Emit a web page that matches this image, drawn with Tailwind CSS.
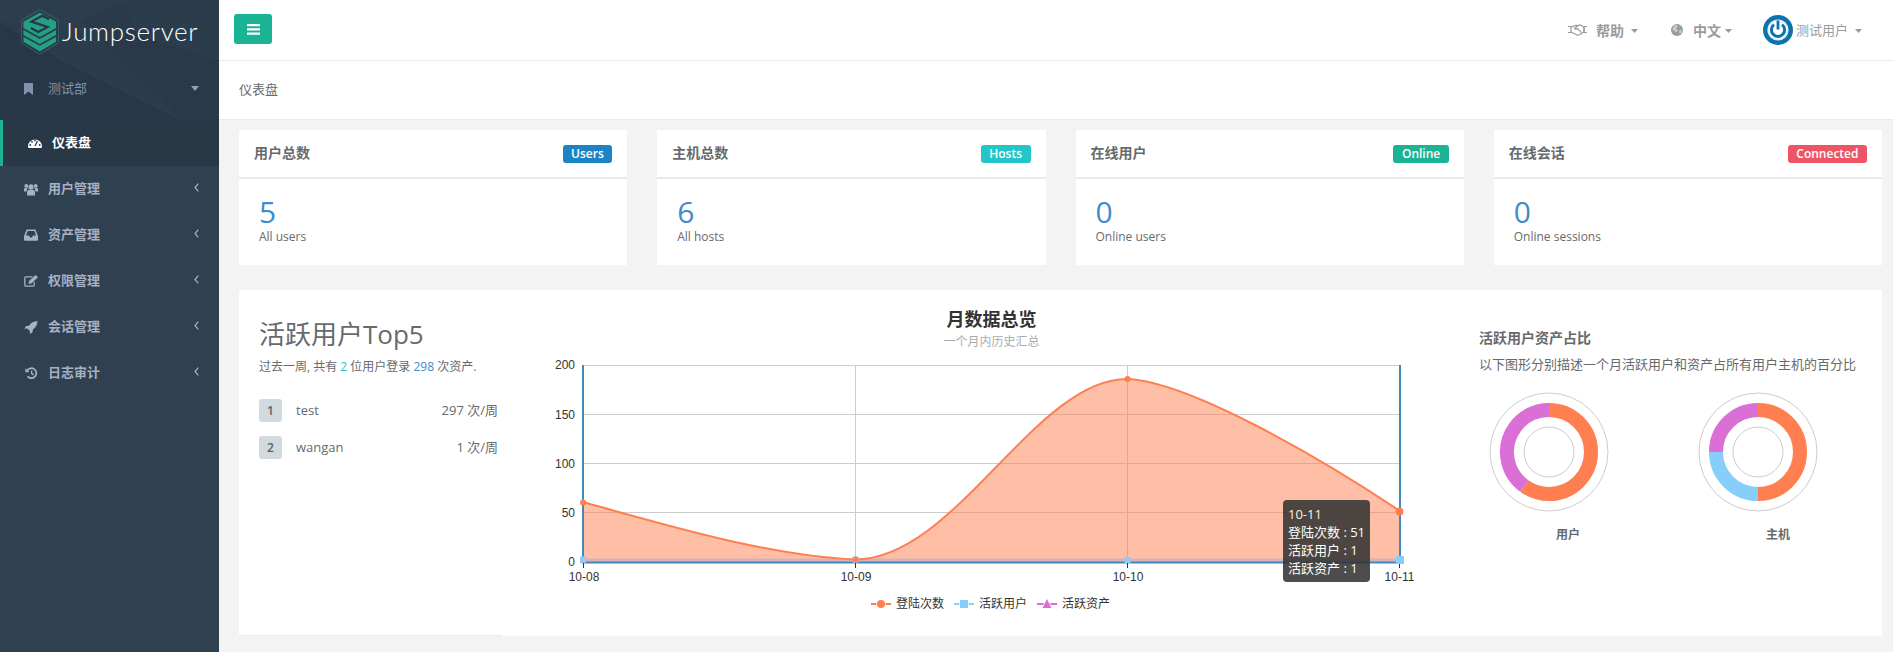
<!DOCTYPE html>
<html lang="zh-CN">
<head>
<meta charset="utf-8">
<title>仪表盘</title>
<script src="https://cdn.jsdelivr.net/npm/@tailwindcss/browser@4"></script>
</head>
<body>
<div class="flex h-[652px] w-[1893px] overflow-hidden bg-[#f3f3f4] text-[13px] text-[#676a6c] font-['Open_Sans','Noto_Sans_CJK_SC',sans-serif]">

  <aside class="w-[219px] shrink-0 bg-[#2f4050]">
    <div class="relative h-[120px] overflow-hidden bg-[#2b3c4c]">
      <svg class="absolute inset-0" width="219" height="120" viewBox="0 0 219 120">
        <polygon points="0,22 60,60 180,120 0,120" fill="#273747"/>
        <polygon points="60,0 120,0 180,120 110,50" fill="#2a3a4a"/>
        <polygon points="120,30 180,120 219,120 219,60" fill="#293949"/>
        <polygon points="0,0 130,0 60,30 0,22" fill="#2c3e4e"/>
      </svg>
      <div class="relative flex items-center pl-[21px] pt-[9px]">
        <svg width="38" height="46" viewBox="20.5 9 38.5 46" class="shrink-0">
          <polygon points="39.5,9.3 58.7,20 58.7,43 39.5,54.5 20.8,43 20.8,20" fill="none" stroke="#2c7f78" stroke-width="0.7"/>
          <polygon points="23,37 39.5,46 56,37 56,42 39.5,51.8 23,42" fill="#24a085"/>
          <polygon points="23,30 39.5,39 56,30 56,35 39.5,44.2 23,35" fill="#24a085"/>
          <polygon points="39.5,12.5 56,21.5 56,28 39.5,37 23,28 23,21.5" fill="#24a085"/>
          <polyline points="49,19 42,15.5 31,21.5 47.5,27 38,32 30.5,28" fill="none" stroke="#263747" stroke-width="2.2"/>
        </svg>
        <span class="mb-[3px] ml-[3px] font-['Lato',sans-serif] text-[26px] font-light leading-none tracking-[0.7px] text-white">Jumpserver</span>
      </div>
      <div class="absolute left-[24px] right-[20px] top-[79px] flex items-center text-[#7e92a9]">
        <svg width="9" height="12" viewBox="0 0 9 12" class="mr-[15px] shrink-0"><path d="M0 .6 Q0 0 .7 0 H8.3 Q9 0 9 .6 V11.6 Q9 12 8.6 11.8 L4.5 8.6 L.4 11.8 Q0 12 0 11.6Z" fill="#7e92a9"/></svg>
        <span>测试部</span>
        <svg width="8" height="5" viewBox="0 0 8 5" class="ml-auto"><path d="M0 0H8L4 5Z" fill="#8fa0b4"/></svg>
      </div>
    </div>
    <nav class="text-[13px] font-semibold text-[#a7b1c2]">
      <a class="flex h-[46px] items-center border-l-[3px] border-[#1ab394] bg-[#293846] pl-[25px] text-white">
        <svg width="14" height="10" viewBox="0 0 14 10" class="mr-[10px] shrink-0"><path d="M0 8.5 A7 7 0 0 1 14 8.5 Q14 10 13 10 H1 Q0 10 0 8.5Z" fill="#fff"/><path d="M7 8 L9.5 3" stroke="#293846" stroke-width="1.2"/><circle cx="2.3" cy="7" r=".9" fill="#293846"/><circle cx="4" cy="3.8" r=".9" fill="#293846"/><circle cx="7" cy="2.4" r=".9" fill="#293846"/><circle cx="11.7" cy="7" r=".9" fill="#293846"/></svg>
        <span>仪表盘</span>
      </a>
      <a class="flex h-[46px] items-center pl-[24px] pr-[20px]">
        <svg width="14" height="13" viewBox="0 0 14 12" class="mr-[10px] shrink-0" fill="#a7b1c2"><circle cx="7" cy="3.4" r="2.6"/><path d="M3 12 V8.8 Q3 6.2 5 6.2 H9 Q11 6.2 11 8.8 V12Z"/><circle cx="2.3" cy="2.4" r="1.9"/><circle cx="11.7" cy="2.4" r="1.9"/><path d="M0 8 V6 Q0 4.6 1.5 4.6 H3.5 Q3.3 6 2.4 8Z"/><path d="M14 8 V6 Q14 4.6 12.5 4.6 H10.5 Q10.7 6 11.6 8Z"/></svg>
        <span>用户管理</span>
        <svg width="5" height="9" viewBox="0 0 5 9" class="ml-auto mb-[4px]"><path d="M4.3 .7 L1 4.5 L4.3 8.3" fill="none" stroke="#a7b1c2" stroke-width="1.2"/></svg>
      </a>
      <a class="flex h-[46px] items-center pl-[24px] pr-[20px]">
        <svg width="14" height="12" viewBox="0 0 14 12" class="mr-[10px] shrink-0"><path fill-rule="evenodd" fill="#a7b1c2" d="M2.6 .5 H11.4 L14 7 V10.8 Q14 11.8 13 11.8 H1 Q0 11.8 0 10.8 V7Z M3.6 2 L2 6.5 H5 L6 8.5 H8 L9 6.5 H12 L10.4 2Z"/></svg>
        <span>资产管理</span>
        <svg width="5" height="9" viewBox="0 0 5 9" class="ml-auto mb-[4px]"><path d="M4.3 .7 L1 4.5 L4.3 8.3" fill="none" stroke="#a7b1c2" stroke-width="1.2"/></svg>
      </a>
      <a class="flex h-[46px] items-center pl-[24px] pr-[20px]">
        <svg width="14" height="12" viewBox="0 0 14 12" class="mr-[10px] shrink-0"><path d="M8.5 1.8 H2 Q.8 1.8 .8 3 V10 Q.8 11.2 2 11.2 H9 Q10.2 11.2 10.2 10 V7" fill="none" stroke="#a7b1c2" stroke-width="1.3"/><path d="M5 6 L11.5 0 L14 2.2 L7.4 8.4 L4.6 8.9Z" fill="#a7b1c2"/></svg>
        <span>权限管理</span>
        <svg width="5" height="9" viewBox="0 0 5 9" class="ml-auto mb-[4px]"><path d="M4.3 .7 L1 4.5 L4.3 8.3" fill="none" stroke="#a7b1c2" stroke-width="1.2"/></svg>
      </a>
      <a class="flex h-[46px] items-center pl-[24px] pr-[20px]">
        <svg width="14" height="13" viewBox="0 0 14 14" class="mr-[10px] shrink-0"><path d="M14 0 C9.8 .2 6.8 2 4.8 5 L1.6 5.4 L0 8.4 L3 8 L6 11 L5.6 14 L8.6 12.4 L9 9.2 C12 7.2 13.8 4.2 14 0Z" fill="#a7b1c2"/></svg>
        <span>会话管理</span>
        <svg width="5" height="9" viewBox="0 0 5 9" class="ml-auto mb-[4px]"><path d="M4.3 .7 L1 4.5 L4.3 8.3" fill="none" stroke="#a7b1c2" stroke-width="1.2"/></svg>
      </a>
      <a class="flex h-[46px] items-center pl-[24px] pr-[20px]">
        <svg width="14" height="12" viewBox="0 0 14 14" class="mr-[10px] shrink-0"><path d="M2.6 4 A5.8 5.8 0 1 1 3 11" fill="none" stroke="#a7b1c2" stroke-width="2"/><path d="M.4 1.4 L5.4 6 H.4Z" fill="#a7b1c2"/><path d="M7.8 4 V7.6 L10.2 9.2" fill="none" stroke="#a7b1c2" stroke-width="1.6"/></svg>
        <span>日志审计</span>
        <svg width="5" height="9" viewBox="0 0 5 9" class="ml-auto mb-[4px]"><path d="M4.3 .7 L1 4.5 L4.3 8.3" fill="none" stroke="#a7b1c2" stroke-width="1.2"/></svg>
      </a>
    </nav>
  </aside>

  <main class="flex min-w-0 flex-1 flex-col">
    <header class="flex h-[61px] items-center border-b border-[#e7eaec] bg-white pl-[15px] pr-[31px]">
      <button class="mb-[2px] flex h-[30px] w-[38px] items-center justify-center rounded-[3px] bg-[#1ab394]">
        <svg width="13" height="11" viewBox="0 0 13 11" fill="#fff"><rect width="13" height="2.2" rx=".5"/><rect y="4.3" width="13" height="2.2" rx=".5"/><rect y="8.6" width="13" height="2.2" rx=".5"/></svg>
      </button>
      <div class="ml-auto flex items-center text-[#999c9e]">
        <svg width="19" height="12" viewBox="0 0 19 12" class="shrink-0" fill="none" stroke="#999c9e" stroke-width="1.2"><path d="M0 2.5 H3 V8.5 H0"/><path d="M19 2.5 H16 V8.5 H19"/><path d="M3 3 L7 1.6 Q8.5 1 9.5 1.8 L12 1 L16 3 V8 L10.8 11 Q9.6 11.6 8.4 10.8 L3 8"/><path d="M9.5 1.8 L6.6 4.6 Q7.6 5.8 9.4 4.6 L13.6 8.6"/></svg>
        <span class="ml-[9px] mt-[1px] text-[14px] font-bold leading-none">帮助</span>
        <svg width="7" height="4" viewBox="0 0 7 4" class="ml-[7px] mt-[1px]"><path d="M0 0H7L3.5 4Z" fill="#999c9e"/></svg>
        <svg width="12" height="12" viewBox="0 0 12 12" class="ml-[33px]"><circle cx="6" cy="6" r="6" fill="#999c9e"/><path d="M3 1.5 L6 1 L6.6 3 L5 4.6 L6.6 6 L5.6 8.6 L3.6 7 L1.4 5.4 Z M8 6.5 L10.6 5.6 L10.4 8.6 L8.6 10Z" fill="#c9cbcc"/></svg>
        <span class="ml-[10px] mt-[1px] text-[14px] font-bold leading-none">中文</span>
        <svg width="7" height="4" viewBox="0 0 7 4" class="ml-[4px] mt-[1px]"><path d="M0 0H7L3.5 4Z" fill="#999c9e"/></svg>
        <svg width="30" height="30" viewBox="0 0 30 30" class="ml-[31px] mb-[1px]"><circle cx="15" cy="15" r="15" fill="#0b73ae"/><circle cx="15" cy="15" r="10.6" fill="#e6eef3"/><circle cx="15" cy="15" r="9" fill="#fff"/><path d="M11 9.6 A6.6 6.6 0 1 0 19 9.6" fill="none" stroke="#0b73ae" stroke-width="3"/><rect x="13.6" y="5.5" width="2.8" height="9" fill="#0b73ae"/></svg>
        <span class="ml-[3px] mt-[1px] leading-none">测试用户</span>
        <svg width="7" height="4" viewBox="0 0 7 4" class="ml-[7px] mt-[2px]"><path d="M0 0H7L3.5 4Z" fill="#999c9e"/></svg>
      </div>
    </header>

    <section class="flex h-[59px] items-center border-b border-[#e7eaec] bg-white px-[20px]">
      <span>仪表盘</span>
    </section>

    <div class="pl-[20px] pr-[11px] pt-[10px]">
      <div class="grid grid-cols-4 gap-[30px]">
        <div class="h-[135px] bg-white">
          <div class="flex h-[49px] items-center justify-between border-b-2 border-[#e7eaec] pl-[15px] pr-[15px]">
            <h5 class="mb-[2px] text-[14px] font-semibold">用户总数</h5>
            <span class="rounded-[3px] bg-[#1c84c6] px-[8.5px] text-[12px] font-semibold leading-[18px] text-white">Users</span>
          </div>
          <div class="pl-[20px] pt-[14px]">
            <div class="text-[30px] leading-[37px] text-[#428bca]">5</div>
            <div class="text-[12px] leading-[13px]">All users</div>
          </div>
        </div>
        <div class="h-[135px] bg-white">
          <div class="flex h-[49px] items-center justify-between border-b-2 border-[#e7eaec] pl-[15px] pr-[15px]">
            <h5 class="mb-[2px] text-[14px] font-semibold">主机总数</h5>
            <span class="rounded-[3px] bg-[#23c6c8] px-[8.5px] text-[12px] font-semibold leading-[18px] text-white">Hosts</span>
          </div>
          <div class="pl-[20px] pt-[14px]">
            <div class="text-[30px] leading-[37px] text-[#428bca]">6</div>
            <div class="text-[12px] leading-[13px]">All hosts</div>
          </div>
        </div>
        <div class="h-[135px] bg-white">
          <div class="flex h-[49px] items-center justify-between border-b-2 border-[#e7eaec] pl-[15px] pr-[15px]">
            <h5 class="mb-[2px] text-[14px] font-semibold">在线用户</h5>
            <span class="rounded-[3px] bg-[#1ab394] px-[8.5px] text-[12px] font-semibold leading-[18px] text-white">Online</span>
          </div>
          <div class="pl-[20px] pt-[14px]">
            <div class="text-[30px] leading-[37px] text-[#428bca]">0</div>
            <div class="text-[12px] leading-[13px]">Online users</div>
          </div>
        </div>
        <div class="h-[135px] bg-white">
          <div class="flex h-[49px] items-center justify-between border-b-2 border-[#e7eaec] pl-[15px] pr-[15px]">
            <h5 class="mb-[2px] text-[14px] font-semibold">在线会话</h5>
            <span class="rounded-[3px] bg-[#ed5565] px-[8.5px] text-[12px] font-semibold leading-[18px] text-white">Connected</span>
          </div>
          <div class="pl-[20px] pt-[14px]">
            <div class="text-[30px] leading-[37px] text-[#428bca]">0</div>
            <div class="text-[12px] leading-[13px]">Online sessions</div>
          </div>
        </div>
      </div>

      <div class="mt-[25px] flex h-[346px] bg-white">
        <div class="w-[263px] shrink-0 border-b border-[#e7eaec] pl-[20px] pr-[4px] pt-[27px]">
          <h2 class="text-[26px] leading-[34px]">活跃用户Top5</h2>
          <p class="mt-[7px] whitespace-nowrap text-[12px] leading-[18px]">过去一周, 共有 <span class="text-[#23c6c8]">2</span> 位用户登录 <span class="text-[#428bca]">298</span> 次资产.</p>
          <div class="mt-[23px] flex h-[23px] items-center">
            <span class="flex h-[23px] w-[23px] items-center justify-center rounded-[3px] bg-[#d1dade] text-[12px] font-semibold text-[#5e5e5e]">1</span>
            <span class="ml-[14px]">test</span>
            <span class="ml-auto">297 次/周</span>
          </div>
          <div class="mt-[14px] flex h-[23px] items-center">
            <span class="flex h-[23px] w-[23px] items-center justify-center rounded-[3px] bg-[#d1dade] text-[12px] font-semibold text-[#5e5e5e]">2</span>
            <span class="ml-[14px]">wangan</span>
            <span class="ml-auto">1 次/周</span>
          </div>
        </div>

        <div class="relative w-[958px] shrink-0 font-['Liberation_Sans','Noto_Sans_CJK_SC',sans-serif]">
          <svg width="958" height="346" viewBox="502 290 958 346">
            <g text-anchor="middle">
              <text x="991.5" y="326" font-size="18" font-weight="700" fill="#333">月数据总览</text>
              <text x="991.5" y="346" font-size="12" fill="#aaa">一个月内历史汇总</text>
            </g>
            <g stroke="#ccc" stroke-width="1">
              <path d="M583 365.5H1400M583 414.5H1400M583 463.5H1400M583 512.5H1400"/>
              <path d="M855.5 365V562M1127.5 365V562"/>
            </g>
            <path d="M583 502 C665 525 770 556 855 559.5 C955 559.5 1035 379 1127 379 C1185 381 1310 451 1400 511 V562 H583Z" fill="#ff7f50" fill-opacity=".5"/>
            <rect x="583" y="558.5" width="817" height="3.5" fill="#a9a6c4" fill-opacity=".5"/>
            <path d="M583 502 C665 525 770 556 855 559.5 C955 559.5 1035 379 1127 379 C1185 381 1310 451 1400 511" fill="none" stroke="#ff7f50" stroke-width="2"/>
            <g stroke="#4488bb" stroke-width="2" fill="none">
              <path d="M583 365V563M1400 365V563M582 562.5H1401"/>
            </g>
            <g stroke="#333" stroke-width="1"><path d="M583.5 563V568M855.5 563V568M1127.5 563V568M1399.5 563V568"/></g>
            <g font-size="12" fill="#333" text-anchor="end">
              <text x="575" y="369">200</text>
              <text x="575" y="419">150</text>
              <text x="575" y="468">100</text>
              <text x="575" y="517">50</text>
              <text x="575" y="566">0</text>
            </g>
            <g font-size="12" fill="#333" text-anchor="middle">
              <text x="584" y="581">10-08</text>
              <text x="856" y="581">10-09</text>
              <text x="1128" y="581">10-10</text>
              <text x="1399.5" y="581">10-11</text>
            </g>
            <g fill="#da70d6"><path d="M583 558l3 5h-6zM855.5 558l3 5h-6zM1127.5 558l3 5h-6zM1400 556l4 7h-8z"/></g>
            <g fill="#87cefa"><rect x="580" y="556.5" width="6" height="6"/><rect x="852.5" y="556.5" width="6" height="6"/><rect x="1124.5" y="557" width="6" height="6"/><rect x="1396" y="556" width="8" height="8"/></g>
            <g fill="#ff7f50"><circle cx="583" cy="502.5" r="3"/><circle cx="855.5" cy="559.5" r="3"/><circle cx="1127.5" cy="379" r="3"/><circle cx="1399.5" cy="511.5" r="4"/></g>
            <g stroke-width="2" fill="none">
              <path d="M871 604H891" stroke="#ff7f50"/><path d="M954 604H974" stroke="#87cefa"/><path d="M1037 604H1057" stroke="#da70d6"/>
            </g>
            <circle cx="881" cy="604" r="4" fill="#ff7f50" stroke="#fff" stroke-width="1.5" paint-order="stroke"/>
            <rect x="960" y="600" width="8" height="8" fill="#87cefa" stroke="#fff" stroke-width="1.5" paint-order="stroke"/>
            <path d="M1047 599l4.5 9h-9z" fill="#da70d6" stroke="#fff" stroke-width="1.5" paint-order="stroke"/>
            <g font-size="12" fill="#333">
              <text x="896" y="608">登陆次数</text>
              <text x="979" y="608">活跃用户</text>
              <text x="1062" y="608">活跃资产</text>
            </g>
          </svg>
          <div class="absolute left-[781px] top-[210px] h-[82px] w-[87px] rounded-[4px] bg-[#323232]/[.87] px-[5px] pt-[5px] font-['Open_Sans','Noto_Sans_CJK_SC',sans-serif] text-[13px] leading-[18px] whitespace-nowrap text-white">
            <div class="text-[#fff3d6]">10-11</div>
            <div>登陆次数 : 51</div>
            <div>活跃用户 : 1</div>
            <div>活跃资产 : 1</div>
          </div>
        </div>

        <div class="min-w-0 flex-1 pl-[19px] pt-[39px]">
          <h4 class="text-[14px] font-semibold leading-[18px]">活跃用户资产占比</h4>
          <p class="mt-[8px] whitespace-nowrap leading-[18px]">以下图形分别描述一个月活跃用户和资产占所有用户主机的百分比</p>
          <div class="mt-[19px] flex">
            <div class="w-[209px] shrink-0">
              <svg width="120" height="120" viewBox="0 0 120 120" class="ml-[10px]">
                <circle cx="60" cy="60" r="59" fill="none" stroke="#ccc"/>
                <circle cx="60" cy="60" r="25" fill="none" stroke="#ccc"/>
                <circle cx="60" cy="60" r="42" fill="none" stroke="#ff7f50" stroke-width="14" pathLength="100" stroke-dasharray="60 40" transform="rotate(-90 60 60)"/>
                <circle cx="60" cy="60" r="42" fill="none" stroke="#da70d6" stroke-width="14" pathLength="100" stroke-dasharray="40 60" transform="rotate(126 60 60)"/>
              </svg>
              <div class="mt-[14px] pl-[77px] text-[12px] font-bold leading-[18px]">用户</div>
            </div>
            <div class="w-[209px] shrink-0">
              <svg width="120" height="120" viewBox="0 0 120 120" class="ml-[10px]">
                <circle cx="60" cy="60" r="59" fill="none" stroke="#ccc"/>
                <circle cx="60" cy="60" r="25" fill="none" stroke="#ccc"/>
                <circle cx="60" cy="60" r="42" fill="none" stroke="#ff7f50" stroke-width="14" pathLength="100" stroke-dasharray="50 50" transform="rotate(-90 60 60)"/>
                <circle cx="60" cy="60" r="42" fill="none" stroke="#87cefa" stroke-width="14" pathLength="100" stroke-dasharray="25 75" transform="rotate(90 60 60)"/>
                <circle cx="60" cy="60" r="42" fill="none" stroke="#da70d6" stroke-width="14" pathLength="100" stroke-dasharray="25 75" transform="rotate(180 60 60)"/>
              </svg>
              <div class="mt-[14px] pl-[78px] text-[12px] font-bold leading-[18px]">主机</div>
            </div>
          </div>
        </div>
      </div>
    </div>
  </main>
</div>
</body>
</html>
